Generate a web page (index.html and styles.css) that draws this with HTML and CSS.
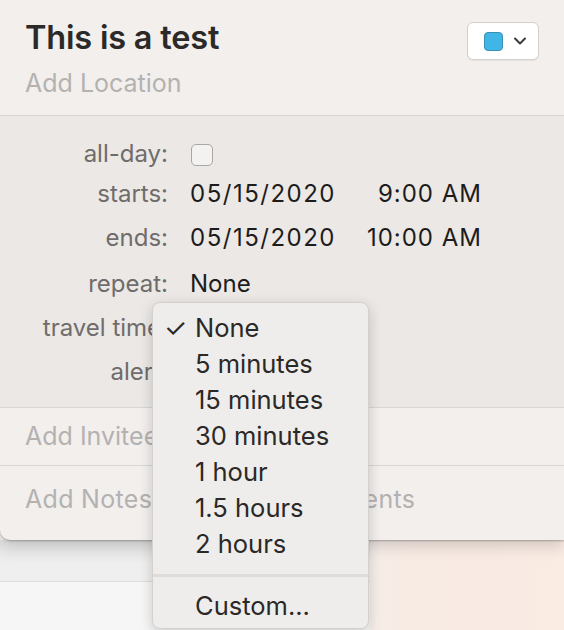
FILE: index.html
```html
<!DOCTYPE html>
<html>
<head>
<meta charset="utf-8">
<link rel="stylesheet" href="styles.css">
</head>
<body>
<div class="screen">
  <div class="popover">
    <div class="header">
      <div class="titles">
        <div class="title">This is a test</div>
        <div class="location">Add Location</div>
      </div>
      <div class="color-btn">
        <span class="swatch"></span>
        <svg class="chev" width="14" height="10" viewBox="0 0 14 10"><path d="M2 2.5 L7 7.5 L12 2.5" fill="none" stroke="#3a3a3a" stroke-width="2" stroke-linecap="round" stroke-linejoin="round"/></svg>
      </div>
    </div>
    <div class="details">
      <div class="row r1"><span class="label">all-day:</span><span class="checkbox"></span></div>
      <div class="row r2"><span class="label">starts:</span><span class="date">05/15/2020</span><span class="time">9:00 AM</span></div>
      <div class="row r3"><span class="label">ends:</span><span class="date">05/15/2020</span><span class="time">10:00 AM</span></div>
      <div class="row r4"><span class="label">repeat:</span><span class="value">None</span></div>
      <div class="row r5"><span class="label">travel time:</span><span class="value">None</span></div>
      <div class="row r6"><span class="label">alert:</span><span class="value">None</span></div>
    </div>
    <div class="field invitees">Add Invitees</div>
    <div class="field notes">Add Notes, URL, or Attachments</div>
  </div>
  <div class="backdrop">
    <div class="back-left"><div class="back-top"></div><div class="back-bottom"></div></div>
    <div class="back-right"></div>
  </div>

  <div class="menu">
    <div class="item checked"><span class="check">✓</span>None</div>
    <div class="item">5 minutes</div>
    <div class="item">15 minutes</div>
    <div class="item">30 minutes</div>
    <div class="item">1 hour</div>
    <div class="item">1.5 hours</div>
    <div class="item">2 hours</div>
    <div class="sep"></div>
    <div class="item custom">Custom...</div>
  </div>
</div>
</body>
</html>
```

FILE: styles.css
```css
html, body {
  margin: 0;
  padding: 0;
}
body {
  width: 564px;
  height: 630px;
  overflow: hidden;
  font-family: Inter, "Noto Sans", "Liberation Sans", sans-serif;
  background: #f4f3f2;
}
.screen {
  position: relative;
  width: 564px;
  height: 630px;
  overflow: hidden;
  display: flex;
  flex-direction: column;
}
.popover {
  position: relative;
  z-index: 2;
  width: 100%;
  background: #f2efed;
  border-bottom-left-radius: 10px;
  box-shadow: 0 6px 16px rgba(0,0,0,0.16), 0 1px 2px rgba(0,0,0,0.25);
}
.header {
  height: 115px;
  box-sizing: border-box;
  padding: 19px 25px 0 25px;
  display: flex;
  justify-content: space-between;
  align-items: flex-start;
}
.title {
  font-size: 32.5px;
  font-weight: 600;
  color: #2b2a29;
  letter-spacing: -0.2px;
  line-height: 38px;
}
.location {
  margin-top: 11px;
  font-size: 25px;
  color: #b4b2b1;
  line-height: 30px;
}
.color-btn {
  margin-top: 3px;
  width: 72px;
  height: 38px;
  box-sizing: border-box;
  background: #ffffff;
  border: 1px solid #d3d0ce;
  border-radius: 6px;
  box-shadow: 0 1px 1px rgba(0,0,0,0.06);
  display: flex;
  align-items: center;
  padding-left: 16px;
  gap: 10px;
}
.swatch {
  width: 19px;
  height: 19px;
  box-sizing: border-box;
  background: #3fb6e6;
  border: 1.5px solid #3a8fb4;
  border-radius: 4px;
}
.chev {
  display: block;
}
.details {
  background: #ebe8e6;
  border-top: 1px solid #d8d5d3;
  border-bottom: 1px solid #d8d5d3;
  padding: 18px 0 14px 0;
}
.row {
  display: flex;
  align-items: center;
}
.r1 { height: 39px; }
.r2 { height: 41px; }
.r3 { height: 47px; }
.r4 { height: 44px; }
.r5 { height: 44px; }
.r6 { height: 44px; }
.label {
  text-align: right;
  color: #6f6c6b;
  font-size: 24px;
  padding-right: 22px;
  box-sizing: border-box;
  width: 190px;
  white-space: nowrap;
}
.date, .time, .value {
  color: #1d1c1c;
  font-size: 24px;
}
.date {
  width: 150px;
  letter-spacing: 1.5px;
}
.time {
  width: 142px;
  text-align: right;
  letter-spacing: 1px;
}
.checkbox {
  width: 22px;
  height: 22px;
  box-sizing: border-box;
  border: 1.5px solid #a9a6a4;
  border-radius: 5px;
  background: #f4f2f1;
  margin-left: 1px;
  margin-top: 3px;
}
.field {
  font-size: 25px;
  color: #b4b2b1;
  padding-left: 25px;
  box-sizing: border-box;
  white-space: nowrap;
}
.invitees {
  height: 58px;
  line-height: 56px;
  border-bottom: 1px solid #d8d5d3;
}
.notes {
  height: 74px;
  padding-top: 18px;
  line-height: 30px;
  letter-spacing: 0.3px;
}
.backdrop {
  flex: 1;
  display: flex;
  background: linear-gradient(90deg, #f1f1f1 0%, #f3f2f1 55%, #f8ebe4 72%, #faebe3 100%);
}
.back-left {
  width: 370px;
  display: flex;
  flex-direction: column;
}
.back-top {
  height: 41px;
  border-bottom: 1px solid #dddcdb;
  background: linear-gradient(180deg, #e4e3e3 0%, #efefef 60%);
}
.back-bottom {
  flex: 1;
  background: #f6f6f6;
}
.back-right {
  flex: 1;
}
.menu {
  position: absolute;
  z-index: 5;
  left: 152px;
  top: 302px;
  width: 217px;
  height: 327px;
  box-sizing: border-box;
  background: #efedeb;
  border: 1px solid #d3d1cf;
  border-radius: 8px;
  box-shadow: 0 4px 14px rgba(0,0,0,0.18);
  padding-top: 7px;
}
.item {
  position: relative;
  height: 36px;
  line-height: 36px;
  padding-left: 42px;
  font-size: 25.5px;
  color: #2a2928;
  white-space: nowrap;
}
.check {
  position: absolute;
  left: 11px;
  top: 0;
  font-size: 26px;
  color: #2a2928;
}
.sep {
  height: 3px;
  background: #dedbd9;
  margin: 12px 0 11px 0;
}
```
